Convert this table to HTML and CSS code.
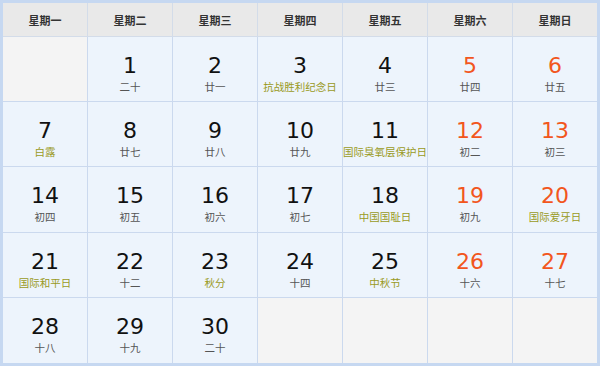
FILE: index.html
```html
<!DOCTYPE html>
<html lang="zh">
<head>
<meta charset="utf-8">
<link rel="stylesheet" href="styles.css">
</head>
<body>
<div class="cal">
  <div class="hd">星期一</div><div class="hd">星期二</div><div class="hd">星期三</div><div class="hd">星期四</div><div class="hd">星期五</div><div class="hd">星期六</div><div class="hd last">星期日</div>

  <div class="c empty"></div>
  <div class="c"><span class="n">1</span><span class="l">二十</span></div>
  <div class="c"><span class="n">2</span><span class="l">廿一</span></div>
  <div class="c"><span class="n">3</span><span class="l f">抗战胜利纪念日</span></div>
  <div class="c"><span class="n">4</span><span class="l">廿三</span></div>
  <div class="c"><span class="n w">5</span><span class="l">廿四</span></div>
  <div class="c last"><span class="n w">6</span><span class="l">廿五</span></div>

  <div class="c"><span class="n">7</span><span class="l f">白露</span></div>
  <div class="c"><span class="n">8</span><span class="l">廿七</span></div>
  <div class="c"><span class="n">9</span><span class="l">廿八</span></div>
  <div class="c"><span class="n">10</span><span class="l">廿九</span></div>
  <div class="c"><span class="n">11</span><span class="l f">国际臭氧层保护日</span></div>
  <div class="c"><span class="n w">12</span><span class="l">初二</span></div>
  <div class="c last"><span class="n w">13</span><span class="l">初三</span></div>

  <div class="c"><span class="n">14</span><span class="l">初四</span></div>
  <div class="c"><span class="n">15</span><span class="l">初五</span></div>
  <div class="c"><span class="n">16</span><span class="l">初六</span></div>
  <div class="c"><span class="n">17</span><span class="l">初七</span></div>
  <div class="c"><span class="n">18</span><span class="l f">中国国耻日</span></div>
  <div class="c"><span class="n w">19</span><span class="l">初九</span></div>
  <div class="c last"><span class="n w">20</span><span class="l f">国际爱牙日</span></div>

  <div class="c"><span class="n">21</span><span class="l f">国际和平日</span></div>
  <div class="c"><span class="n">22</span><span class="l">十二</span></div>
  <div class="c"><span class="n">23</span><span class="l f">秋分</span></div>
  <div class="c"><span class="n">24</span><span class="l">十四</span></div>
  <div class="c"><span class="n">25</span><span class="l f">中秋节</span></div>
  <div class="c"><span class="n w">26</span><span class="l">十六</span></div>
  <div class="c last"><span class="n w">27</span><span class="l">十七</span></div>

  <div class="c bottom"><span class="n">28</span><span class="l">十八</span></div>
  <div class="c bottom"><span class="n">29</span><span class="l">十九</span></div>
  <div class="c bottom"><span class="n">30</span><span class="l">二十</span></div>
  <div class="c empty bottom"></div>
  <div class="c empty bottom"></div>
  <div class="c empty bottom"></div>
  <div class="c empty bottom last"></div>
</div>
</body>
</html>
```
FILE: styles.css
```css
html, body {
  margin: 0;
  padding: 0;
  background: #ffffff;
}
.cal {
  box-sizing: border-box;
  width: 600px;
  height: 366px;
  border: 3px solid #c6d8f1;
  display: grid;
  grid-template-columns: 85px 85px 85px 85px 85px 85px 84px;
  grid-template-rows: 34px repeat(5, 1fr);
  font-family: "DejaVu Sans", Verdana, "Noto Sans CJK SC", sans-serif;
}
.hd {
  background: #e9e9e9;
  border-right: 1px solid #d3dce9;
  border-bottom: 1px solid #d3dce9;
  display: flex;
  align-items: center;
  justify-content: center;
  font-family: "Noto Sans CJK SC", sans-serif;
  font-size: 11px;
  font-weight: bold;
  color: #333333;
}
.c {
  background: #edf4fc;
  border-right: 1px solid #cbd9ee;
  border-bottom: 1px solid #cbd9ee;
  display: flex;
  flex-direction: column;
  align-items: center;
  padding-top: 17px;
  box-sizing: border-box;
}
.last { border-right: none; }
.bottom { border-bottom: none; }
.empty { background: #f4f4f4; }
.n {
  font-family: "DejaVu Sans", Verdana, sans-serif;
  font-size: 22px;
  line-height: 24px;
  color: #111111;
}
.n.w { color: #f2561d; }
.l {
  font-family: "Noto Sans CJK SC", sans-serif;
  font-size: 10.5px;
  line-height: 17px;
  color: #555555;
  white-space: nowrap;
}
.l.f { color: #9a9a1c; }
```
